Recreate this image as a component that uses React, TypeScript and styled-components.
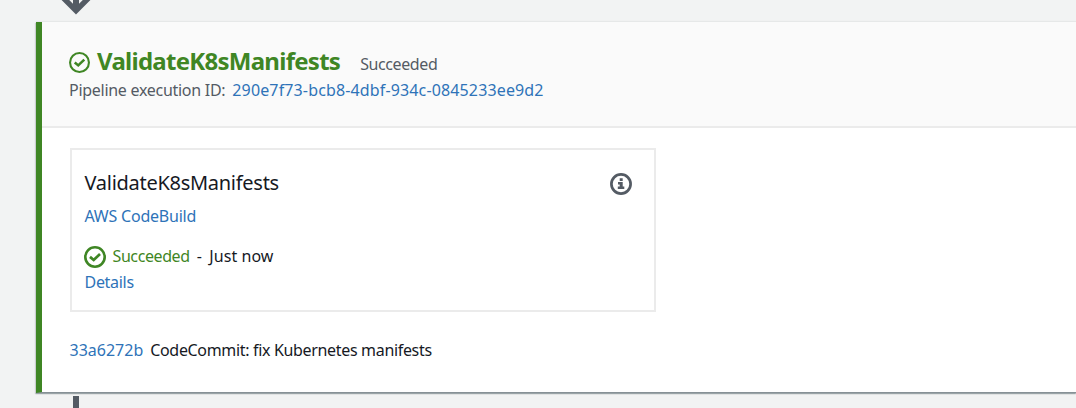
import React from 'react';
import styled, { createGlobalStyle } from 'styled-components';

const GlobalStyle = createGlobalStyle`
  * { box-sizing: border-box; }
  html, body { margin: 0; height: 100%; overflow: hidden; background: #f2f3f3; }
  body { font-family: "Noto Sans", "Open Sans", sans-serif; font-size: 16px; color: #16191f; }
`;

const Page = styled.main`
  display: flex;
  flex-direction: column;
  height: 408px;
  padding-left: 36px;
  overflow: hidden;
`;

const ArrowEnd = styled.svg`
  display: block;
  flex: none;
  width: 32px;
  height: 22px;
  margin-left: 24px;
`;

const ConnectorStart = styled.div`
  flex: none;
  width: 6px;
  height: 12px;
  margin: 3px 0 0 37px;
  background: #545b64;
`;

const Stage = styled.section`
  flex: none;
  height: 371px;
  border-left: 6px solid #3f8624;
  border-bottom: 1px solid #879196;
  background: #fff;
  box-shadow: 0 -1px 1px #e6e8e8, 0 1px 1px rgba(0, 28, 36, 0.25), -1px 1px 1px rgba(0, 28, 36, 0.15);
`;

const StageHeader = styled.header`
  height: 106px;
  padding: 24px 0 0 27px;
  background: #fafafa;
  border-bottom: 2px solid #ebebeb;
`;

const Row = styled.div<{ $height: number }>`
  display: flex;
  align-items: center;
  height: ${(p) => p.$height}px;
`;

const StageTitle = styled.h2`
  margin: -2px 0 0 7px;
  font-size: 24px;
  line-height: 32px;
  font-weight: 700;
  letter-spacing: -0.73px;
  color: #3f8624;
`;

const Text = styled.span<{ $color?: string; $track?: number; $gap?: number }>`
  margin-left: ${(p) => p.$gap ?? 0}px;
  line-height: 24px;
  white-space: nowrap;
  color: ${(p) => p.$color ?? '#16191f'};
  letter-spacing: ${(p) => p.$track ?? -0.5}px;
`;

const StageStatus = styled(Text)`
  padding-top: 4px;
`;

const Link = styled(Text).attrs({ as: 'a', $color: '#2e73b8' })``;

const ActionCard = styled.article`
  width: 586px;
  height: 164px;
  margin: 20px 0 0 28px;
  padding: 19px 22px 0 12px;
  border: 2px solid #ebebeb;
`;

const ActionTitle = styled.h3`
  flex: 1;
  margin: 0;
  padding-left: 0.5px;
  font-size: 20px;
  line-height: 28px;
  font-weight: 400;
  letter-spacing: -0.28px;
`;

const Provider = styled(Row)`
  margin-top: 6px;
`;

const Status = styled(Row)`
  margin-top: 14px;
`;

const Revision = styled(Row)`
  margin: 25px 0 0 27px;
`;

const Icon = styled.svg`
  display: block;
  flex: none;
  margin-top: 1px;
`;

const SuccessIcon = ({ size, stroke }: { size: number; stroke: number }) => (
  <Icon width={size} height={size} viewBox="0 0 22 22" fill="none" stroke="#3f8624" strokeWidth={stroke}>
    <circle cx="11" cy="11" r={11 - stroke / 2} />
    <path strokeWidth="2.7" d="M6 10.9 9.7 14 16 8" />
  </Icon>
);

const InfoIcon = () => (
  <Icon width="22" height="22" viewBox="0 0 22 22" fill="none">
    <circle cx="11" cy="11" r="9.6" stroke="#545b64" strokeWidth="2.7" />
    <path fill="#545b64" d="M9.7 5.3h3v2.8h-3zM8 9.1h4.7v4.3h1.6v2.5H7.8v-2.5h1.9v-1.9H8z" />
  </Icon>
);

export default function App() {
  return (
    <>
      <GlobalStyle />
      <Page>
        <ArrowEnd viewBox="0 0 32 22" fill="none" stroke="#545b64">
          <path strokeWidth="6" d="M16 -4V9" />
          <path strokeWidth="5.4" d="M0 -5.4 16 10.6 32 -5.4" />
        </ArrowEnd>
        <Stage>
          <StageHeader>
            <Row $height={32}>
              <SuccessIcon size={21} stroke={2.2} />
              <StageTitle>ValidateK8sManifests</StageTitle>
              <StageStatus $color="#545b64" $gap={20} $track={-0.4}>Succeeded</StageStatus>
            </Row>
            <Row $height={24}>
              <Text $color="#545b64" $track={-0.28}>Pipeline execution ID:</Text>
              <Link $gap={7} $track={0.14}>290e7f73-bcb8-4dbf-934c-0845233ee9d2</Link>
            </Row>
          </StageHeader>
          <ActionCard>
            <Row $height={28}>
              <ActionTitle>ValidateK8sManifests</ActionTitle>
              <InfoIcon />
            </Row>
            <Provider $height={26}>
              <Link $gap={0.5} $track={-0.22}>AWS CodeBuild</Link>
            </Provider>
            <Status $height={26}>
              <SuccessIcon size={22} stroke={2.6} />
              <Text $color="#3f8624" $gap={6.5} $track={-0.4}>Succeeded</Text>
              <Text $gap={7}>-</Text>
              <Text $gap={8} $track={0.05}>Just now</Text>
            </Status>
            <Row $height={26}>
              <Link $gap={0.5} $track={-0.3}>Details</Link>
            </Row>
          </ActionCard>
          <Revision $height={26}>
            <Link $gap={0.5} $track={0}>33a6272b</Link>
            <Text $gap={7} $track={-0.33}>CodeCommit: fix Kubernetes manifests</Text>
          </Revision>
        </Stage>
        <ConnectorStart />
      </Page>
    </>
  );
}
